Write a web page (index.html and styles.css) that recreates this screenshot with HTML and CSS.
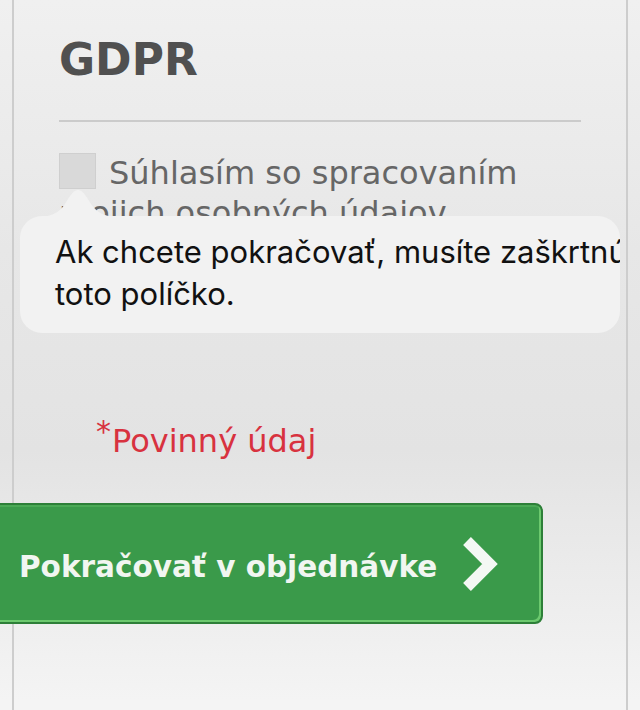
FILE: index.html
```html
<!DOCTYPE html>
<html lang="sk">
<head>
    <meta charset="UTF-8">
    <meta name="viewport" content="width=device-width, initial-scale=1.0">
    <title>GDPR</title>
    <link rel="stylesheet" href="styles.css">
</head>
<body>
    <div class="panel">
        <h2 class="panel-title">GDPR</h2>
        <hr class="divider">

        <div class="consent">
            <label class="consent-label"><span class="checkbox"></span>Súhlasím so spracovaním mojich osobných údajov</label>

            <!-- validation bubble -->
            <div class="tooltip">
                <svg class="tooltip-arrow" width="84" height="28" viewBox="0 0 84 28">
                    <path d="M0 28 C14 28 22 25 29 15 C35 5 38 1 42 1 C46 1 49 5 55 15 C62 25 70 28 84 28 Z" fill="#f2f2f2"/>
                </svg>
                <div class="tooltip-body">
                    <div class="tooltip-line">Ak chcete pokračovať, musíte zaškrtnúť</div>
                    <div class="tooltip-line">toto políčko.</div>
                </div>
            </div>
        </div>

        <p class="required"><span class="required-mark">*</span>Povinný údaj</p>

        <button class="btn-continue">
            <span class="btn-text">Pokračovať v objednávke</span>
            <svg class="btn-icon" width="40" height="56" viewBox="0 0 40 56">
                <polyline points="7,5 30,28 7,51" fill="none" stroke="#f4f8f4" stroke-width="11" stroke-linejoin="miter"/>
            </svg>
        </button>
    </div>
</body>
</html>
```

FILE: styles.css
```css
/* General Styles */
body {
    margin: 0;
    font-family: "DejaVu Sans", Verdana, sans-serif;
    background: linear-gradient(#f0f0f0 0, #e7e7e7 250px, #e3e3e3 450px, #f4f4f4 700px);
    min-height: 100vh;
    overflow: hidden;
}

.panel {
    margin: 0 12px;
    min-height: 710px;
    border-left: 2px solid #cdcdcd;
    border-right: 2px solid #cdcdcd;
    padding: 35px 45px 0;
}

.panel-title {
    margin: 0 0 35px;
    font-size: 44px;
    line-height: 50px;
    font-weight: bold;
    color: #505050;
}

.divider {
    margin: 0;
    height: 0;
    border: 0;
    border-top: 2px solid #cbcbcb;
}

/* Consent checkbox */
.consent {
    position: relative;
    margin-top: 31px;
}

.consent-label {
    display: block;
    font-size: 32px;
    line-height: 40px;
    color: #666;
}

.checkbox {
    display: inline-block;
    width: 35px;
    height: 34px;
    margin-right: 13px;
    vertical-align: -5px;
    background: #d9d9d9;
    border: 1px solid #cfcfcf;
}

/* Validation bubble */
.tooltip {
    position: absolute;
    left: -39px;
    top: 63px;
    width: 600px;
}

.tooltip-arrow {
    position: absolute;
    left: 16px;
    top: -27px;
    display: block;
}

.tooltip-body {
    height: 117px;
    box-sizing: border-box;
    padding: 15px 0 0 35px;
    background: #f2f2f2;
    border-radius: 22px;
    overflow: hidden;
    font-family: Inter, Roboto, sans-serif;
    font-size: 31px;
    line-height: 42px;
    color: #111;
}

.tooltip-line {
    white-space: nowrap;
}

/* Required note */
.required {
    margin: 188px 0 0;
    padding-left: 37px;
    font-size: 32px;
    line-height: 40px;
    color: #d8323f;
}

.required-mark {
    font-size: 30px;
    line-height: 0;
    vertical-align: 10px;
    margin-right: 1px;
}

/* Continue button */
.btn-continue {
    display: flex;
    align-items: center;
    gap: 23px;
    box-sizing: border-box;
    width: 553px;
    height: 121px;
    margin: 42px 0 0 -69px;
    padding: 0 0 0 27px;
    background: #3a9a4a;
    border: 2px solid #2d7f38;
    border-radius: 8px;
    box-shadow: inset -2px -2px 0 #6cc96e, inset 0 2px 0 #4aa955;
    font-family: "DejaVu Sans", Verdana, sans-serif;
    font-size: 29.5px;
    font-weight: bold;
    color: #f1f6f1;
    cursor: pointer;
}

.btn-text {
    margin-top: 7px;
}

.btn-icon {
    display: block;
}
```
